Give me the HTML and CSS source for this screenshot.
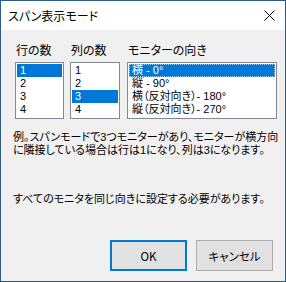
FILE: index.html
```html
<!DOCTYPE html>
<html lang="ja">
<head>
  <meta charset="UTF-8">
  <title>スパン表示モード</title>
  <link rel="stylesheet" href="styles.css">
</head>
<body>

  <div class="window">
    <div class="titlebar">
      <span class="title">スパン表示モード</span>
      <svg class="close" width="11" height="11" viewBox="0 0 11 11">
        <path d="M0.5 0.5 L10.5 10.5 M10.5 0.5 L0.5 10.5" stroke="#000" stroke-width="1" fill="none"/>
      </svg>
    </div>

    <div class="content">
      <div class="lists">
        <div class="group rows">
          <div class="label">行の数</div>
          <ul class="listbox">
            <li class="sel">1</li>
            <li>2</li>
            <li>3</li>
            <li>4</li>
          </ul>
        </div>
        <div class="group cols">
          <div class="label">列の数</div>
          <ul class="listbox">
            <li>1</li>
            <li>2</li>
            <li class="sel">3</li>
            <li>4</li>
          </ul>
        </div>
        <div class="group orient">
          <div class="label">モニターの向き</div>
          <ul class="listbox">
            <li class="sel focus">横 - 0°</li>
            <li>縦 - 90°</li>
            <li>横（反対向き）- 180°</li>
            <li>縦（反対向き）- 270°</li>
          </ul>
        </div>
      </div>

      <p class="note">例。スパンモードで3つモニターがあり、モニターが横方向<br>に隣接している場合は行は1になり、列は3になります。</p>
      <p class="note note-all">すべてのモニタを同じ向きに設定する必要があります。</p>

      <div class="buttons">
        <button class="btn btn-default">OK</button>
        <button class="btn">キャンセル</button>
      </div>
    </div>
  </div>

</body>
</html>
```

FILE: styles.css
```css
* { box-sizing: border-box; }
html, body { margin: 0; padding: 0; }
body { font-family: "Noto Sans CJK JP", "Noto Sans", sans-serif; font-size: 11px; color: #000; font-feature-settings: "palt"; }

.window { width: 286px; height: 282px; border: 1px solid #2b5b84; background: #f0f0f0; display: flex; flex-direction: column; }

.titlebar { height: 29px; background: #fff; display: flex; align-items: center; justify-content: space-between; padding: 0 10px 0 7px; }
.title { font-size: 12px; line-height: 14px; padding-top: 1px; }
.close { display: block; }

.content { flex: 1; display: flex; flex-direction: column; padding: 13px 0 10px 12px; }

.lists { display: flex; margin-left: 2px; }
.group { display: flex; flex-direction: column; }
.rows { width: 49px; }
.cols { width: 50px; margin-left: 6px; }
.orient { width: 150px; margin-left: 7px; }
.label { line-height: 14px; height: 14px; margin-bottom: 5px; padding-left: 1px; font-size: 12px; }

.listbox { list-style: none; margin: 0; padding: 1px; height: 57px; background: #fff; border: 1px solid #828790; }
.listbox li { height: 13px; line-height: 13px; padding-left: 3px; white-space: nowrap; font-family: "Liberation Sans", "Noto Sans CJK JP", sans-serif; font-size: 11px; }
.listbox li.sel { background: #0078d7; color: #fff; }
.listbox li.focus { outline: 1px dotted rgba(255, 255, 255, 0.6); outline-offset: -1px; }

.note { margin: 12px 0 0; line-height: 13px; white-space: nowrap; font-family: "Liberation Sans", "Noto Sans CJK JP", sans-serif; }
.note-all { margin-top: 36px; }

.buttons { margin-top: auto; display: flex; gap: 9px; padding-left: 97px; }
.btn { width: 77px; height: 31px; font: inherit; font-size: 11.5px; background: #e1e1e1; border: 1px solid #adadad; padding: 0; color: #000; }
.btn-default { border: 2px solid #0078d7; }
```
